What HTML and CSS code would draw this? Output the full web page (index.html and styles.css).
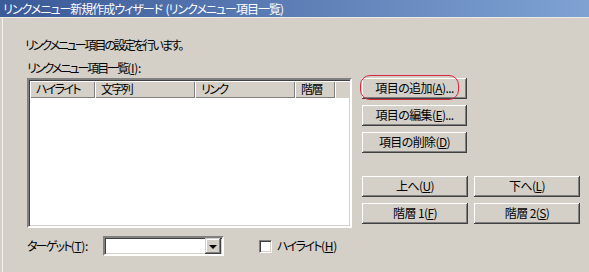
FILE: index.html
```html
<!DOCTYPE html>
<html lang="ja">
<head>
<meta charset="utf-8">
<link rel="stylesheet" href="styles.css">
</head>
<body>
<div class="titlebar">リンクメニュー新規作成ウィザード&nbsp; (リンクメニュー項目一覧)</div>
<div class="frame">
  <div class="content">
    <p class="desc">リンクメニュー項目の設定を行います。</p>
    <p class="label">リンクメニュー項目一覧<span class="mn">(<u>I</u>):</span></p>
    <div class="main">
      <div class="listbox">
        <div class="header">
          <div class="hcell c1">ハイライト</div>
          <div class="hcell c2">文字列</div>
          <div class="hcell c3">リンク</div>
          <div class="hcell c4">階層</div>
          <div class="hcell c5"></div>
        </div>
      </div>
      <div class="side">
        <div class="topbtns">
          <div class="btn wide hl">項目の追加(<u>A</u>)...<span class="oval"></span></div>
          <div class="btn wide">項目の編集(<u>E</u>)...</div>
          <div class="btn wide">項目の削除(<u>D</u>)</div>
        </div>
        <div class="gridbtns">
          <div class="btn">上へ(<u>U</u>)</div>
          <div class="btn">下へ(<u>L</u>)</div>
          <div class="btn">階層 1(<u>F</u>)</div>
          <div class="btn">階層 2(<u>S</u>)</div>
        </div>
      </div>
    </div>
    <div class="bottom">
      <span class="tlabel">ターゲット<span class="mn">(<u>T</u>):</span></span>
      <div class="combo"><span class="drop"><span class="tri"></span></span></div>
      <span class="check"></span>
      <span class="clabel">ハイライト<span class="mn">(<u>H</u>)</span></span>
    </div>
  </div>
</div>
</body>
</html>
```
FILE: styles.css
```css
html, body {
  margin: 0;
  padding: 0;
}
body {
  width: 589px;
  height: 272px;
  overflow: hidden;
  background: #d4d0c8;
  font-family: "Noto Sans CJK JP", "Noto Sans", sans-serif;
  font-size: 12px;
  line-height: 14px;
  color: #000;
  font-feature-settings: "palt" 1;
  letter-spacing: -0.6px;
}
u { text-underline-offset: 1px; }
.mn { letter-spacing: -0.3px; }
.titlebar {
  height: 17px;
  line-height: 17px;
  padding-left: 3px;
  color: #fff;
  background: linear-gradient(to right, #3a5a98, #7fa2d3);
  border-bottom: 1px solid #ecebe6;
  white-space: nowrap;
  letter-spacing: -1px;
}
.frame {
  margin-left: 2px;
  border-left: 1px solid #f2f1ec;
  height: 254px;
  overflow: hidden;
}
.content {
  padding-left: 22px;
}
.desc {
  margin: 20px 0 0 0;
  letter-spacing: -2.1px;
}
.label {
  margin: 9px 0 0 2px;
  letter-spacing: -2px;
}
.main {
  display: flex;
  margin-top: 3px;
  margin-left: 2px;
  gap: 10px;
}
.listbox {
  width: 321px;
  height: 146px;
  background: #fff;
  border: 2px solid;
  border-color: #808080 #fff #fff #808080;
  box-shadow: inset 1px 1px #404040, inset -1px -1px #d4d0c8;
  box-sizing: content-box;
}
.header {
  display: flex;
  height: 17px;
  margin: 1px 0 0 1px;
}
.hcell {
  box-sizing: border-box;
  height: 17px;
  line-height: 16px;
  padding-left: 6px;
  background: #d4d0c8;
  box-shadow: inset 1px 1px #fff, inset -1px -1px #808080;
  white-space: nowrap;
  letter-spacing: -1.6px;
}
.c1 { width: 65px; }
.c2 { width: 100px; }
.c3 { width: 100px; }
.c4 { width: 40px; }
.c5 { flex: 1; box-shadow: inset 1px 1px #fff; }
.side {
  display: flex;
  flex-direction: column;
}
.topbtns {
  display: flex;
  flex-direction: column;
  gap: 6px;
}
.btn {
  position: relative;
  box-sizing: border-box;
  height: 21px;
  line-height: 20px;
  width: 106px;
  text-align: center;
  background: #d4d0c8;
  box-shadow: inset -1px -1px #404040, inset 1px 1px #fff, inset -2px -2px #808080, inset 2px 2px #d4d0c8;
  white-space: nowrap;
}
.btn.wide { width: 105px; }
.oval {
  position: absolute;
  left: -2px;
  top: -3px;
  width: 97px;
  height: 23px;
  border: 1px solid #d8283c;
  border-radius: 10px;
}
.gridbtns {
  margin-top: 23px;
  display: grid;
  grid-template-columns: 106px 106px;
  column-gap: 6px;
  row-gap: 6px;
}
.bottom {
  display: flex;
  align-items: center;
  margin-top: 8px;
  margin-left: 2px;
  height: 20px;
}
.tlabel {
  width: 76px;
  letter-spacing: -1.8px;
  white-space: nowrap;
}
.combo {
  position: relative;
  box-sizing: border-box;
  width: 121px;
  height: 20px;
  background: #fff;
  border: 2px solid;
  border-color: #808080 #fff #fff #808080;
  box-shadow: inset 1px 1px #404040, inset -1px -1px #d4d0c8;
  display: flex;
  justify-content: flex-end;
  padding: 0 1px 0 0;
}
.drop {
  box-sizing: border-box;
  width: 16px;
  height: 16px;
  background: #d4d0c8;
  box-shadow: inset -1px -1px #404040, inset 1px 1px #d4d0c8, inset -2px -2px #808080, inset 2px 2px #fff;
  display: flex;
  align-items: center;
  justify-content: center;
}
.tri {
  width: 0;
  height: 0;
  border-left: 4px solid transparent;
  border-right: 4px solid transparent;
  border-top: 4px solid #000;
  margin-top: 1px;
}
.check {
  box-sizing: border-box;
  width: 13px;
  height: 13px;
  margin-left: 35px;
  background: #fff;
  border: 1px solid;
  border-color: #808080 #fff #fff #808080;
  box-shadow: inset 1px 1px #404040, inset -1px -1px #d4d0c8;
}
.clabel {
  margin-left: 5px;
  letter-spacing: -1.6px;
  white-space: nowrap;
}
```
